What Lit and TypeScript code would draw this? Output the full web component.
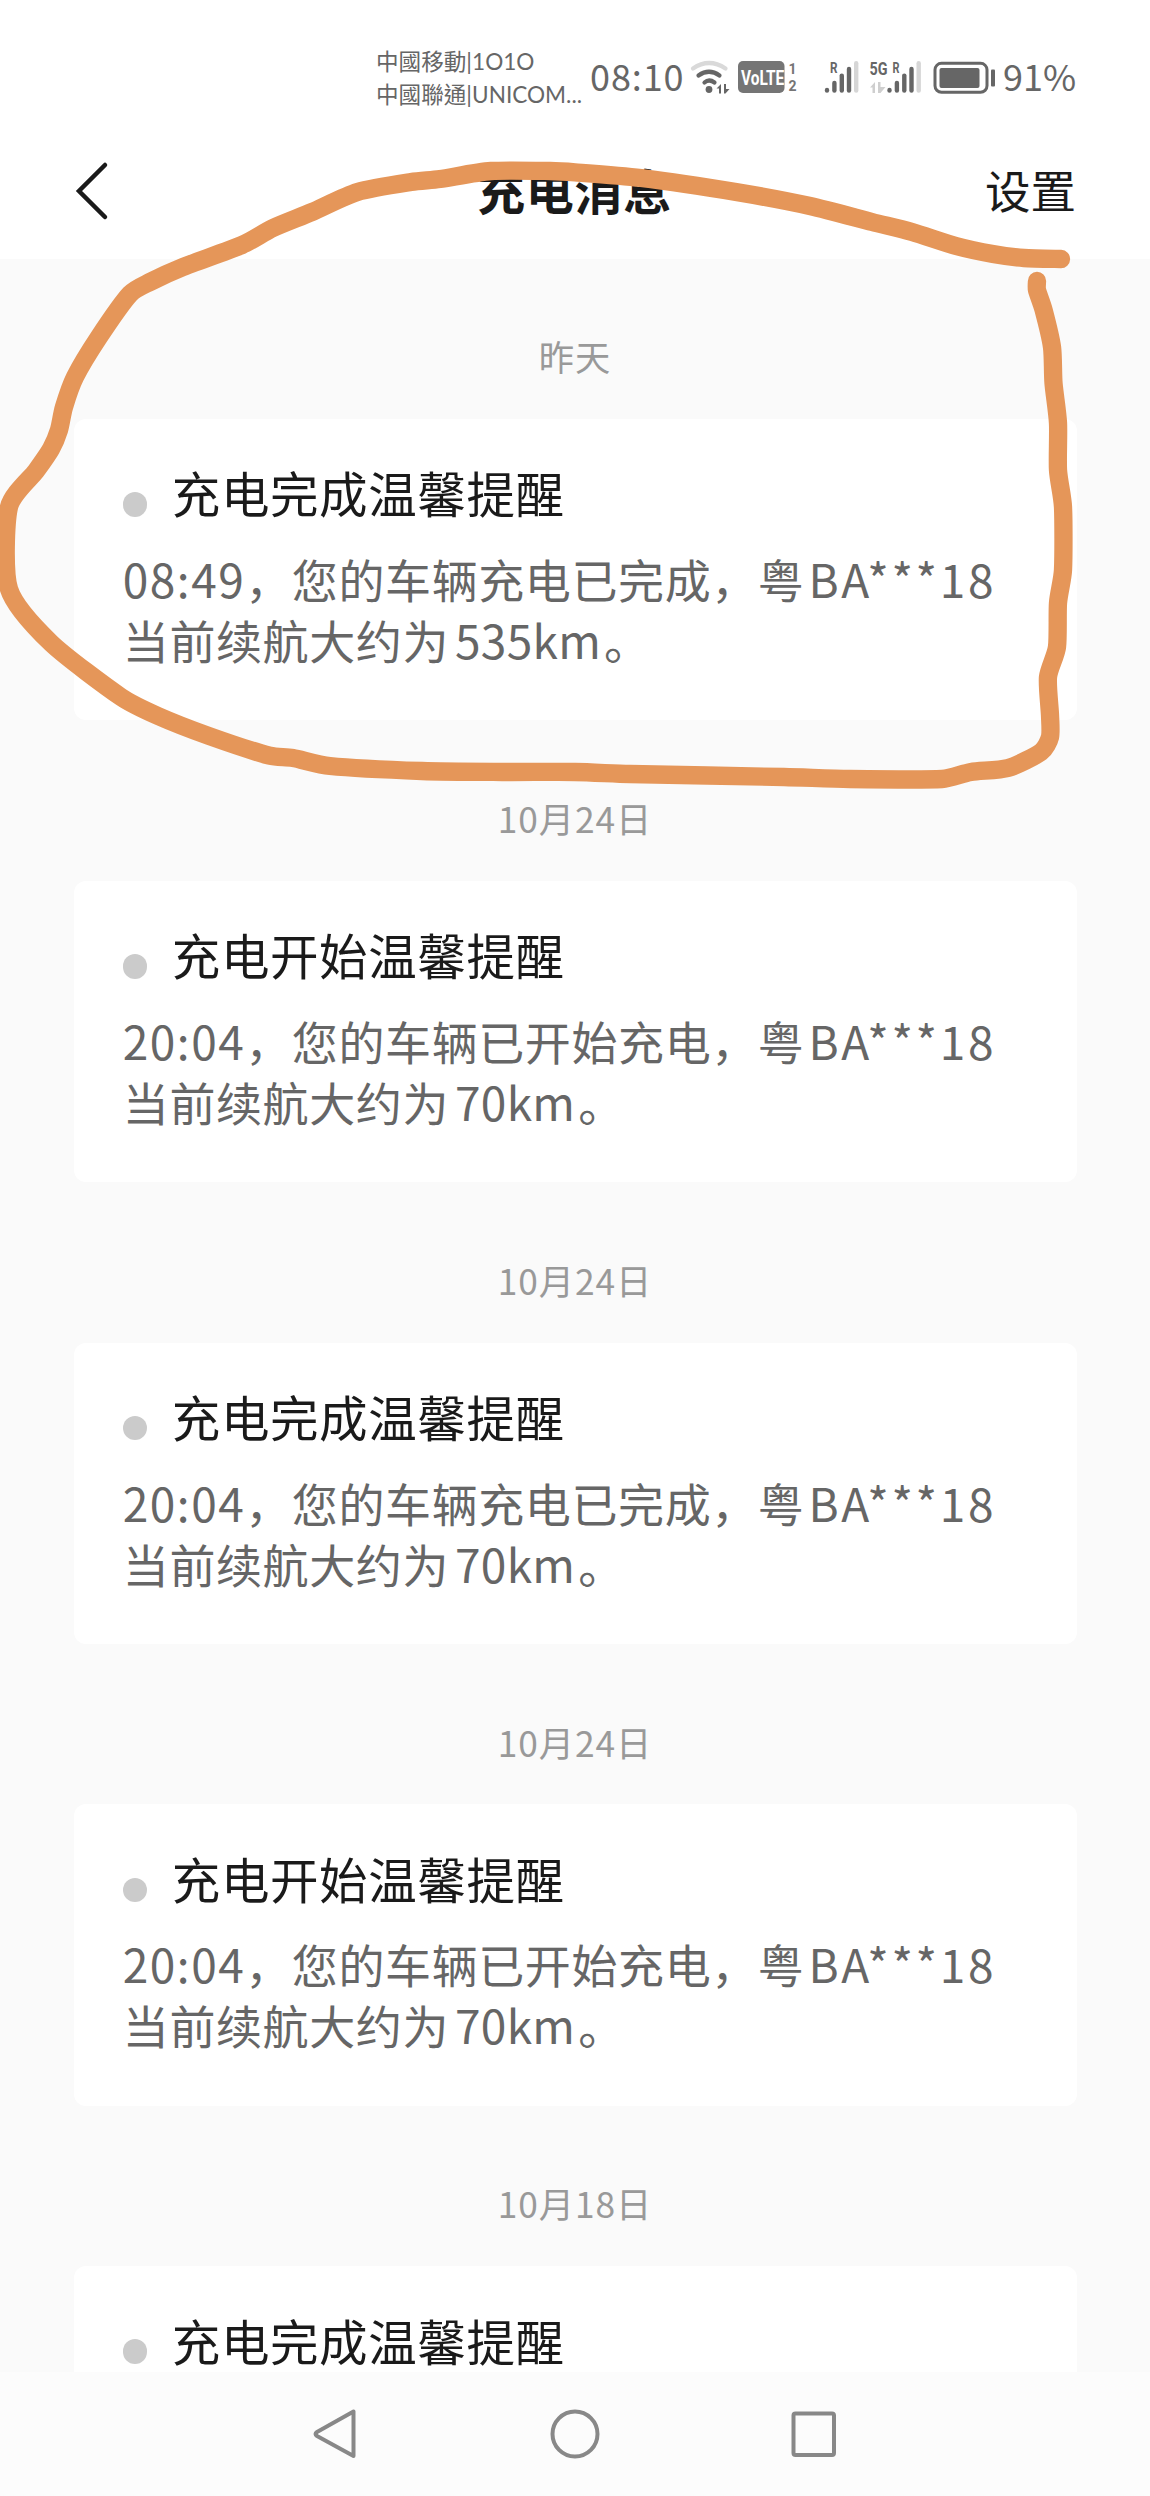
import { LitElement, html, svg, css } from "lit";
import { customElement, property } from "lit/decorators.js";

type Point = [number, number];

interface ChargeMessage {
  date: string;
  title: string;
  time: string;
  action: string;
  plate: string;
  range: string;
}

const MESSAGES: ChargeMessage[] = [
  { date: "昨天", title: "充电完成温馨提醒", time: "08:49", action: "您的车辆充电已完成", plate: "BA***18", range: "535km" },
  { date: "10月24日", title: "充电开始温馨提醒", time: "20:04", action: "您的车辆已开始充电", plate: "BA***18", range: "70km" },
  { date: "10月24日", title: "充电完成温馨提醒", time: "20:04", action: "您的车辆充电已完成", plate: "BA***18", range: "70km" },
  { date: "10月24日", title: "充电开始温馨提醒", time: "20:04", action: "您的车辆已开始充电", plate: "BA***18", range: "70km" },
  { date: "10月18日", title: "充电完成温馨提醒", time: "", action: "", plate: "", range: "" },
];

const MARKER_LOOP: Point[] = [
  [1061, 259], [1024, 258], [993, 254], [956, 246], [912, 232], [872, 222], [810, 206], [736, 192],
  [641, 178], [575, 172.3], [550, 171], [491, 171], [440, 179], [411, 182], [357.5, 192], [312, 212],
  [273, 228], [242, 245], [183, 267], [150, 282], [130, 294], [99, 337], [75, 377], [64, 407],
  [59, 430], [51, 449], [36, 471], [9, 507], [9, 589], [51, 643], [121, 697], [158, 716],
  [209, 736], [269.5, 755.7], [293, 758], [330, 766], [422, 771], [502, 772], [575, 772],
  [630, 774], [784, 777], [850, 779], [942, 779], [971, 772], [1008, 768], [1041, 752],
  [1050, 737], [1050, 715], [1048, 677], [1057, 647], [1058, 603], [1063, 570], [1063, 507],
  [1058, 470], [1058, 423], [1053.5, 383], [1052, 347], [1043.6, 310], [1037, 290], [1037, 281],
];

/** Joins the points with gently rounded cubic segments. */
function smoothPath(points: Point[]): string {
  const tension = 8;
  let d = `M${points[0][0]} ${points[0][1]}`;
  for (let i = 0; i < points.length - 1; i++) {
    const a = points[Math.max(0, i - 1)];
    const b = points[i];
    const c = points[i + 1];
    const e = points[Math.min(points.length - 1, i + 2)];
    const span = Math.hypot(c[0] - b[0], c[1] - b[1]);
    const inLen = Math.hypot(c[0] - a[0], c[1] - a[1]) || 1;
    const outLen = Math.hypot(e[0] - b[0], e[1] - b[1]) || 1;
    const k1 = Math.min(1 / tension, (span * 0.3) / inLen);
    const k2 = Math.min(1 / tension, (span * 0.3) / outLen);
    d += `C${b[0] + (c[0] - a[0]) * k1} ${b[1] + (c[1] - a[1]) * k1} ${c[0] - (e[0] - b[0]) * k2} ${c[1] - (e[1] - b[1]) * k2} ${c[0]} ${c[1]}`;
  }
  return d;
}

@customElement("status-bar")
export class StatusBar extends LitElement {
  static styles = css`
    :host {
      display: flex;
      height: 124px;
      box-sizing: border-box;
      padding: 44px 0 0 376px;
      color: #666;
      font-family: "Noto Sans CJK SC", sans-serif;
    }
    .carriers {
      width: 214px;
      padding-top: 1px;
      box-sizing: border-box;
      font: 400 22.6px/33px "Lato", "Noto Sans CJK TC", sans-serif;
      white-space: nowrap;
    }
    .clock {
      width: 100px;
      font-size: 36px;
      line-height: 62px;
      letter-spacing: 0.9px;
      white-space: nowrap;
    }
    svg { display: block; flex: none; }
    .battery {
      font-size: 36px;
      line-height: 62px;
      margin-left: 5px;
    }
    .tiny { font-family: "Roboto", sans-serif; font-weight: 700; }
  `;

  private bars(x: number) {
    return svg`
      <g stroke="#666" stroke-width="4.4" stroke-linecap="round">
        <path d="M${x} 46v0.600"></path>
        <path d="M${x + 7.4} 39v7.600"></path>
        <path d="M${x + 14.8} 31.600v15"></path>
        <path d="M${x + 22} 25v21.600"></path>
        <path d="M${x + 29.2} 19.300v27.300" stroke="#d6d6d6"></path>
      </g>`;
  }

  render() {
    return html`
      <div class="carriers">
        <div>中國移動|1O1O</div>
        <div>中國聯通|UNICOM...</div>
      </div>
      <div class="clock">08:10</div>
      <svg width="308" height="62" viewBox="690 0 308 62">
        <g fill="none" stroke="#666" stroke-width="4.2" stroke-linecap="round">
          <path d="M693 24.500Q709 13.500 725.500 24.500" stroke="#d9d9d9"></path>
          <path d="M698.500 31.500Q709 24 719.500 31.500"></path>
          <path d="M704.500 38.500Q709 34.500 714.500 38.500"></path>
        </g>
        <circle cx="709" cy="45.500" r="3.400" fill="#666"></circle>
        <path d="M716.500 44.500l4.500-4.500v9.500h-2v-5zM724 40v9.500h1.500l4-4.500h-3.500v-5z" fill="#666"></path>
        <rect x="738" y="17" width="46.500" height="32" rx="5" fill="#757575"></rect>
        <text class="tiny" transform="translate(741 40.500) scale(0.735 1)" font-size="21" fill="#fff">VoLTE</text>
        <text class="tiny" x="788.500" y="29.500" font-size="14" fill="#757575">1</text>
        <text class="tiny" x="788.500" y="46.700" font-size="14" fill="#757575">2</text>
        <text class="tiny" x="830" y="28.500" font-size="15.500" textLength="7.500" lengthAdjust="spacingAndGlyphs" fill="#666">R</text>
        ${this.bars(827)}
        <text class="tiny" x="869.500" y="30.500" font-size="18" textLength="18" lengthAdjust="spacingAndGlyphs" fill="#666">5G</text>
        <text class="tiny" x="892.500" y="28.500" font-size="15.500" textLength="7" lengthAdjust="spacingAndGlyphs" fill="#666">R</text>
        <path d="M870 43.500l5-5.500v11h-2.500v-5.500zM878 38v11h2.500l5-6h-5v-5z" fill="#cfcfcf"></path>
        ${this.bars(889.500)}
        <rect x="935" y="19.300" width="52" height="29" rx="6.500" fill="none" stroke="#666" stroke-width="3"></rect>
        <rect x="939.500" y="24" width="40" height="20" rx="2" fill="#666"></rect>
        <rect x="991" y="25.500" width="4" height="17" rx="1" fill="#666"></rect>
      </svg>
      <div class="battery">91%</div>
    `;
  }
}

@customElement("message-card")
export class MessageCard extends LitElement {
  @property({ attribute: false }) message!: ChargeMessage;

  static styles = css`
    :host { display: block; flex: none; }
    .date {
      padding: 75.500px 0 40.800px;
      font-size: 35.300px;
      line-height: 44px;
      letter-spacing: 0.900px;
      text-align: center;
      color: #999;
    }
    .card {
      height: 301.500px;
      box-sizing: border-box;
      margin: 0 73.500px;
      padding: 43.500px 0 0 49.300px;
      border-radius: 12px;
      background: #fff;
    }
    .head {
      display: flex;
      align-items: center;
      height: 60px;
      color: #1a1a1a;
      font-size: 48.500px;
      line-height: 60px;
      letter-spacing: 0.600px;
    }
    .dot {
      width: 24.500px;
      height: 24.500px;
      margin: 24px 24.500px 0 0;
      border-radius: 50%;
      background: #cbcbcb;
    }
    .text {
      margin-top: 25.500px;
      color: #666;
      font-size: 46px;
      line-height: 61px;
      letter-spacing: 0.600px;
      white-space: nowrap;
    }
    .time { letter-spacing: 1.500px; }
    .plate { margin-left: 4px; letter-spacing: 2.700px; }
    .range { margin: 0 3px 0 6px; letter-spacing: 0.300px; }
  `;

  render() {
    const m = this.message;
    return html`
      <div class="date">${m.date}</div>
      <div class="card">
        <div class="head"><span class="dot"></span><span>${m.title}</span></div>
        ${m.time
          ? html`<div class="text">
              <div><span class="time">${m.time}</span>，${m.action}，粤<span class="plate">${m.plate}</span></div>
              <div>当前续航大约为<span class="range">${m.range}</span>。</div>
            </div>`
          : null}
      </div>
    `;
  }
}

@customElement("app-root")
export class AppRoot extends LitElement {
  static styles = css`
    :host {
      display: flex;
      flex-direction: column;
      position: relative;
      width: 1150px;
      height: 2496px;
      overflow: hidden;
      background: #fff;
      font-family: "Noto Sans CJK SC", sans-serif;
    }
    .header {
      display: grid;
      grid-template-columns: 1fr auto 1fr;
      align-items: center;
      height: 134.700px;
      flex: none;
      box-sizing: border-box;
      padding: 0 74px 4px 73px;
      color: #1a1a1a;
    }
    .title {
      font-size: 48px;
      line-height: 60px;
      letter-spacing: 0.700px;
      font-weight: 700;
      margin: 0;
    }
    .settings {
      justify-self: end;
      font-size: 45.500px;
      line-height: 60px;
    }
    .list {
      flex: 1;
      min-height: 0;
      overflow: hidden;
      display: flex;
      flex-direction: column;
      background: #fafafa;
    }
    .nav {
      flex: none;
      height: 124px;
      background: #fcfcfc;
    }
    .nav svg, .back { display: block; }
    .marker {
      position: absolute;
      left: 0;
      top: 0;
      pointer-events: none;
    }
  `;

  render() {
    return html`
      <status-bar></status-bar>
      <header class="header">
        <svg class="back" width="40" height="64" viewBox="0 0 40 64">
          <path d="M32 8L6 34l26 26" fill="none" stroke="#1a1a1a" stroke-width="4.500" stroke-linecap="round"></path>
        </svg>
        <h1 class="title">充电消息</h1>
        <span class="settings">设置</span>
      </header>
      <main class="list">
        ${MESSAGES.map((m) => html`<message-card .message=${m}></message-card>`)}
      </main>
      <nav class="nav">
        <svg width="1150" height="124" viewBox="0 0 1150 124">
          <g fill="none" stroke="#888" stroke-width="4" stroke-linejoin="round">
            <path d="M353.500 39.500v44.500L317 64q-3-2 0-4z"></path>
            <circle cx="575" cy="62" r="22.500"></circle>
            <rect x="793.500" y="41.500" width="40.500" height="41.500" rx="2"></rect>
          </g>
        </svg>
      </nav>
      <svg class="marker" width="1150" height="820" viewBox="0 0 1150 820">
        <path d=${smoothPath(MARKER_LOOP)} fill="none" stroke="#e59659" stroke-width="18.300" stroke-linecap="round" stroke-linejoin="round"></path>
      </svg>
    `;
  }
}
